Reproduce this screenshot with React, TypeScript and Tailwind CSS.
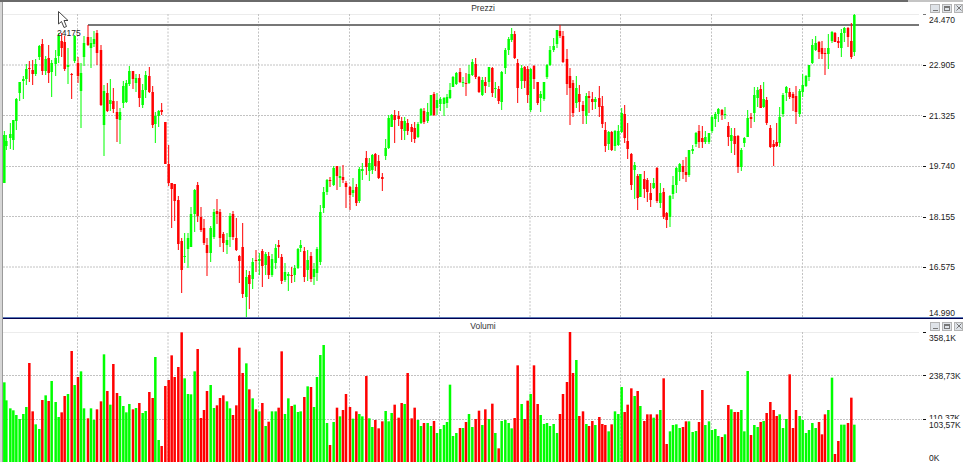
type Row = [number, "r" | "g", number, number, number, number, number];

const S1: Row[] = [
[13,"g",214,131,135,183,183],[19,"g",268,135,141,146,150],[31,"g",292,123,134,138,149],[40,"g",298,120,120,140,150],[49,"g",312,98,99,121,130],[59,"g",324,82,82,93,101],[70,"g",309,76,79,81,99],[79,"g",288,64,69,79,85],[88,"r",156,61,68,69,82],[98,"r",301,60,70,74,85],[107,"g",340,59,64,74,76],[118,"g",354,45,46,57,60],[127,"r",267,39,44,71,75],[137,"g",253,56,59,71,75],[146,"r",270,45,58,73,83],[155,"g",210,60,63,72,97],[167,"g",273,50,58,64,76],[176,"g",318,33,36,56,63],[185,"r",304,33,41,48,57],[194,"r",255,36,42,69,71],[204,"g",249,48,65,67,84],[215,"r",120,73,74,75,99],[224,"g",222,35,36,61,63],[234,"r",198,57,63,76,83],[243,"g",181,63,73,91,128],[252,"g",292,36,43,57,66],[264,"r",322,25,37,45,46],[273,"g",292,37,43,48,68],[282,"g",327,31,39,44,47],[291,"r",295,30,33,53,65],[303,"r",271,45,50,105,106],[312,"g",130,85,91,125,156],[322,"r",240,83,93,111,112],[331,"g",281,79,100,104,111],[340,"r",159,88,101,109,113],[351,"r",246,101,112,119,142],[360,"g",255,108,112,120,144],[370,"g",285,81,86,103,108],[379,"g",304,80,83,102,103],[388,"g",279,66,71,84,86],[399,"r",295,71,71,79,89],[408,"g",291,74,78,83,92],[418,"r",276,74,78,98,107],[428,"g",306,84,90,105,108],[437,"g",300,71,75,90,98],[448,"r",243,67,76,92,93],[458,"r",261,86,92,125,128],[466,"g",138,112,116,124,143],[476,"g",387,110,111,116,127],[485,"r",405,103,110,112,115],[496,"r",225,122,122,164,164],[506,"r",207,145,164,183,186],[515,"r",133,183,183,189,228],[524,"r",198,184,184,201,221],[535,"r",168,196,200,244,250],[545,"r",64,238,241,270,293],[554,"g",202,233,256,257,263],[564,"g",249,233,238,249,268],[573,"g",250,207,214,247,247],[584,"g",181,189,190,214,232],[593,"r",114,182,185,216,222],[603,"r",321,207,217,230,232],[612,"r",297,219,228,243,245],[621,"r",240,238,245,253,276],[632,"g",222,226,228,253,262],[642,"g",291,209,212,237,239],[651,"r",283,199,211,214,224],[660,"r",261,209,212,238,247],[670,"r",253,232,234,243,252],[681,"g",271,233,240,245,254],[690,"g",292,213,216,237,247],[699,"r",312,211,214,237,240],[709,"r",283,218,238,250,251],[718,"r",110,255,256,261,283],[728,"r",186,223,247,294,298],[739,"g",157,270,277,297,317],[748,"r",235,271,275,284,309],[758,"g",262,258,262,279,289],[768,"r",295,250,260,261,272],[778,"g",301,253,259,261,275],[787,"r",276,249,251,266,287],[797,"g",345,252,254,265,275],[806,"r",332,252,256,275,279],[816,"g",301,254,259,275,277],[827,"g",301,244,248,263,269],[836,"r",290,240,245,247,258],[845,"r",121,254,257,281,284],[855,"g",309,263,272,280,282],[865,"g",262,272,274,276,291],[875,"r",285,267,275,276,283],[884,"g",281,265,268,275,282],[894,"g",303,248,249,268,269],[902,"g",301,240,245,248,252],[913,"r",258,247,251,277,282],[923,"g",226,250,260,270,281],[933,"r",228,252,256,279,282],[942,"g",288,263,269,277,285],[951,"g",198,247,249,273,281],
];

const S2: Row[] = [
[1,"g",132,205,212,262,265],[11,"g",102,187,192,208,213],[21,"g",336,179,180,192,195],[30,"r",402,177,180,181,187],[41,"g",333,166,168,185,186],[51,"r",290,166,166,176,190],[60,"g",316,167,176,178,187],[69,"r",297,165,177,180,183],[78,"r",249,181,183,187,208],[90,"r",288,186,187,195,210],[99,"g",323,178,190,193,197],[109,"r",301,184,187,203,206],[118,"g",309,167,169,201,203],[127,"g",316,163,169,171,180],[139,"r",195,151,158,167,175],[148,"g",322,158,163,171,181],[157,"g",348,154,155,170,174],[166,"r",327,153,154,166,171],[176,"r",352,155,161,178,179],[187,"r",331,173,177,179,191],[197,"g",300,139,148,156,160],[206,"g",331,115,118,148,149],[215,"g",306,114,115,127,127],[224,"r",281,110,115,120,143],[236,"r",320,111,116,119,126],[245,"r",276,117,121,129,140],[254,"g",279,117,121,131,140],[263,"r",186,119,123,131,135],[275,"r",322,124,127,132,142],[284,"r",290,122,128,139,143],[294,"g",327,122,124,137,138],[303,"g",345,108,109,123,124],[312,"r",336,108,111,122,124],[323,"g",336,103,112,121,123],[333,"g",345,95,95,115,116],[342,"r",330,92,94,115,116],[351,"g",366,93,100,108,115],[361,"g",354,97,99,104,111],[372,"g",342,97,98,104,116],[381,"g",333,94,97,103,108],[390,"g",221,83,90,98,99],[399,"g",375,76,77,87,87],[409,"g",366,72,73,84,85],[420,"r",351,68,72,82,83],[429,"g",351,77,82,83,87],[438,"r",333,73,83,84,96],[447,"g",309,65,74,83,84],[457,"g",348,59,62,75,76],[467,"r",324,58,64,77,79],[477,"r",299,76,77,92,93],[487,"g",342,77,80,95,96],[496,"r",295,77,82,86,93],[507,"g",324,67,67,82,87],[517,"r",278,67,68,93,97],[526,"g",366,82,88,89,98],[536,"r",412,86,89,101,104],[545,"g",330,71,72,102,110],[556,"g",327,48,50,68,74],[566,"g",336,37,39,50,55],[575,"g",352,28,34,40,42],[584,"r",321,31,34,58,59],[593,"r",163,59,63,88,103],[605,"g",279,65,68,81,89],[614,"r",324,66,67,81,88],[623,"r",269,66,69,95,103],[632,"g",249,68,69,110,112],[642,"r",163,65,66,79,89],[653,"r",279,82,82,103,105],[662,"g",312,91,94,98,112],[672,"g",339,82,82,99,101],[681,"g",336,64,65,77,79],[690,"g",345,46,50,65,66],[701,"g",339,38,46,50,52],[711,"g",366,30,30,44,48],[720,"r",309,25,31,36,38],[729,"r",249,31,36,62,63],[741,"r",213,49,59,84,95],[750,"r",63,68,76,88,125],[759,"r",186,80,83,113,117],[769,"g",147,76,88,103,108],[778,"r",315,85,94,102,112],[789,"r",301,101,105,111,124],[799,"g",339,93,96,116,124],[807,"r",345,91,96,98,113],[817,"r",330,92,99,102,110],[826,"g",342,97,99,102,109],[838,"r",318,86,98,107,117],[847,"r",339,96,106,124,128],[856,"r",342,122,130,146,152],[866,"g",361,131,132,144,150],[875,"r",340,131,132,150,151],[885,"g",301,130,131,146,151],[895,"g",309,125,131,145,146],[905,"g",228,108,113,132,133],[914,"r",303,105,114,138,143],[923,"r",281,123,141,149,159],[934,"r",232,153,154,185,190],[944,"g",255,162,165,170,199],[953,"r",240,174,176,198,210],
];

const S3: Row[] = [
[1,"g",285,174,174,197,197],[13,"r",330,171,179,189,198],[22,"r",310,178,180,192,202],[32,"r",310,183,193,200,207],[41,"g",320,178,183,188,189],[51,"r",310,167,168,201,203],[61,"g",297,183,193,203,208],[71,"r",202,188,192,217,219],[80,"r",399,212,213,220,228],[90,"g",361,195,196,217,227],[99,"g",342,176,185,194,199],[109,"g",340,167,168,185,193],[119,"g",351,163,164,172,181],[129,"r",348,160,166,172,179],[138,"r",331,157,172,175,182],[147,"g",331,150,150,175,177],[158,"g",363,145,149,151,154],[168,"g",360,132,133,144,147],[177,"r",333,125,131,142,148],[187,"r",237,126,138,142,148],[196,"g",342,131,137,142,144],[207,"g",331,133,133,142,144],[216,"g",357,115,117,131,133],[226,"g",354,112,114,119,127],[235,"g",375,108,109,114,122],[246,"r",378,109,110,115,120],[255,"g",370,107,114,115,119],[265,"r",282,122,126,137,146],[274,"g",295,128,135,141,153],[284,"r",303,128,136,144,155],[294,"r",303,135,136,167,173],[304,"g",297,148,150,167,171],[313,"g",361,137,138,143,147],[323,"g",180,110,118,137,137],[333,"r",372,113,117,119,128],[343,"g",342,87,95,113,122],[353,"g",348,87,90,98,107],[362,"r",333,85,89,108,108],[371,"g",330,82,99,107,108],[380,"r",306,97,100,123,125],[391,"r",273,125,128,147,148],[401,"r",297,140,144,147,166],[410,"r",315,123,142,146,147],[419,"g",310,107,117,143,147],[429,"g",351,93,95,114,117],[439,"g",324,86,87,93,101],[449,"r",190,88,92,97,99],[459,"r",351,92,94,98,111],[468,"r",297,86,96,112,124],[479,"g",315,89,91,114,117],[488,"g",327,74,85,92,97],[498,"g",366,75,76,86,87],[507,"g",357,65,65,77,81],[517,"g",336,39,45,63,64],[527,"g",351,36,43,50,51],[537,"r",333,41,42,52,59],[546,"r",370,41,48,54,59],[555,"r",310,48,53,54,75],[565,"g",297,34,48,54,69],[576,"g",200,31,32,41,43],[585,"r",429,32,33,42,42],[595,"r",390,37,41,43,48],[604,"g",341,29,33,48,57],[613,"g",341,27,28,33,42],[624,"r",336,27,28,37,47],[634,"r",260,23,41,57,59],[643,"g",341,14,15,52,56],
];

const bars = [
  ...S1.map((r) => ({ r, x: r[0] / 3 })),
  ...S2.map((r) => ({ r, x: 320 + r[0] / 3 })),
  ...S3.map((r) => ({ r, x: 640 + r[0] / 3 })),
];

const UP = "#00ff00";
const DOWN = "#ff0000";

const priceV = [77.5, 168, 258.5, 349.5, 439.5, 530, 620.5, 711.5, 802.5];
const priceH = [65, 115.5, 166.5, 216.5, 267];
const priceTicks = [14, 65, 116, 166, 217, 267];
const volumeH = [374.5, 418.5];
const volumeTicks = [331, 374, 418];

function GridLines({ v, h, y0, y1 }: { v: number[]; h: number[]; y0: number; y1: number }) {
  return (
    <g fill="none">
      <line x1={3} x2={919} y1={y0 + 0.5} y2={y0 + 0.5} stroke="#ececec" />
      {v.map((x) => (
        <line key={x} x1={x} x2={x} y1={y0} y2={y1} stroke="#c2c2c2" strokeDasharray="2 1.5" />
      ))}
      {h.map((y) => (
        <line key={y} x1={3} x2={922} y1={y} y2={y} stroke="#c2c2c2" strokeDasharray="2 1" />
      ))}
    </g>
  );
}

function WindowButtons() {
  return (
    <div className="flex justify-end gap-[2px]">
      <div className="flex h-[9px] w-[10px] items-end justify-center border border-[#b4b4b4] bg-[#dfe3e8] pb-[1px]">
        <div className="h-[1px] w-[5px] bg-[#777]" />
      </div>
      <div className="flex h-[9px] w-[10px] items-center justify-center border border-[#b4b4b4] bg-[#dfe3e8]">
        <div className="h-[5px] w-[6px] border border-t-2 border-[#777]" />
      </div>
      <div className="flex h-[9px] w-[9px] items-center justify-center border border-[#b4b4b4] bg-[#dfe3e8]">
        <svg width="6" height="6" viewBox="0 0 6 6">
          <path d="M0.5 0.5 L5.5 5.5 M5.5 0.5 L0.5 5.5" stroke="#777" strokeWidth="1" />
        </svg>
      </div>
    </div>
  );
}

function TitleRow({ title }: { title: string }) {
  return (
    <div className="grid h-[12px] grid-cols-[1fr_auto_1fr] items-center">
      <div />
      <span className="text-[8.5px] leading-[12px] text-[#333]">{title}</span>
      <WindowButtons />
    </div>
  );
}

function PriceChart() {
  return (
    <svg width={924} height={303} viewBox="3 14 924 303" className="block shrink-0">
      <GridLines v={priceV} h={priceH} y0={14} y1={317} />
      {priceTicks.map((y) => (
        <rect key={y} x={923} y={y} width={3} height={1} fill={y === 14 ? "#777" : "#111"} />
      ))}
      <rect x={88} y={24} width={831} height={2} fill="#777" />
      {bars.map(({ r, x }, i) => {
        const fill = r[1] === "r" ? DOWN : UP;
        return (
          <g key={i} fill={fill}>
            <rect x={x - 0.5} y={r[3]} width={1} height={r[6] - r[3]} />
            <rect x={x - 1.25} y={r[4]} width={2.5} height={Math.max(r[5] - r[4], 1)} />
          </g>
        );
      })}
    </svg>
  );
}

function VolumeChart() {
  return (
    <svg width={924} height={131} viewBox="3 331 924 131" className="block shrink-0">
      <GridLines v={priceV} h={volumeH} y0={331} y1={462} />
      {volumeTicks.map((y) => (
        <rect key={y} x={923} y={y} width={3} height={1} fill="#111" />
      ))}
      {bars.map(({ r, x }, i) => {
        const top = 310 + r[2] / 3;
        return (
          <rect key={i} x={x - 1.25} y={top} width={2.5} height={461 - top} fill={r[1] === "r" ? DOWN : UP} />
        );
      })}
    </svg>
  );
}

export default function App() {
  return (
    <div className="flex h-[462px] w-[963px] flex-col overflow-hidden bg-white font-['Liberation_Sans',sans-serif]">
      <div className="flex h-[2px] shrink-0">
        <div className="flex-1 bg-[#6a6a6a]" />
        <div className="w-[55px] bg-[#c4c4c4]" />
      </div>
      <div className="flex min-h-0 flex-1">
        <div className="w-[3px] shrink-0 border-r border-r-[#9a9a9a] bg-[#d6d6d6]" />
        <div className="flex min-w-0 flex-1 flex-col">
          <section className="relative h-[315px] shrink-0">
            <TitleRow title="Prezzi" />
            <div className="flex">
              <PriceChart />
              <div className="flex flex-col pl-[2px] text-[8.5px] leading-[12px] text-[#222]">
                <span>24.470</span>
                <span className="mt-[33px]">22.905</span>
                <span className="mt-[39px]">21.325</span>
                <span className="mt-[38px]">19.740</span>
                <span className="mt-[39px]">18.155</span>
                <span className="mt-[38px]">16.575</span>
                <span className="mt-[34px]">14.990</span>
              </div>
            </div>
            <svg
              width="12"
              height="18"
              viewBox="0 0 12 18"
              className="absolute left-[55px] top-[9px]"
            >
              <path
                d="M0.5 0.5 L0.5 13 L3.5 10.5 L6 16.5 L8.5 15.5 L6 9.5 L10 9.5 Z"
                fill="#fff"
                stroke="#444"
                strokeWidth="1"
              />
            </svg>
            <span className="absolute left-[54px] top-[25px] text-[8.5px] leading-[12px] text-[#222]">24175</span>
          </section>
          <div className="h-[1px] shrink-0 bg-[#5b7ab8]" />
          <div className="h-[1px] shrink-0 bg-[#000050]" />
          <section className="flex min-h-0 flex-1 flex-col pt-[1px]">
            <TitleRow title="Volumi" />
            <div className="flex">
              <VolumeChart />
              <div className="flex flex-col pl-[2px] text-[8.5px] leading-[12px] text-[#222]">
                <span>358,1K</span>
                <span className="mt-[26px]">238,73K</span>
                <span className="mt-[30px]">110,37K</span>
                <span className="relative -mt-[5px] bg-white">103,57K</span>
                <span className="mt-[21px]">0K</span>
              </div>
            </div>
          </section>
        </div>
      </div>
    </div>
  );
}
